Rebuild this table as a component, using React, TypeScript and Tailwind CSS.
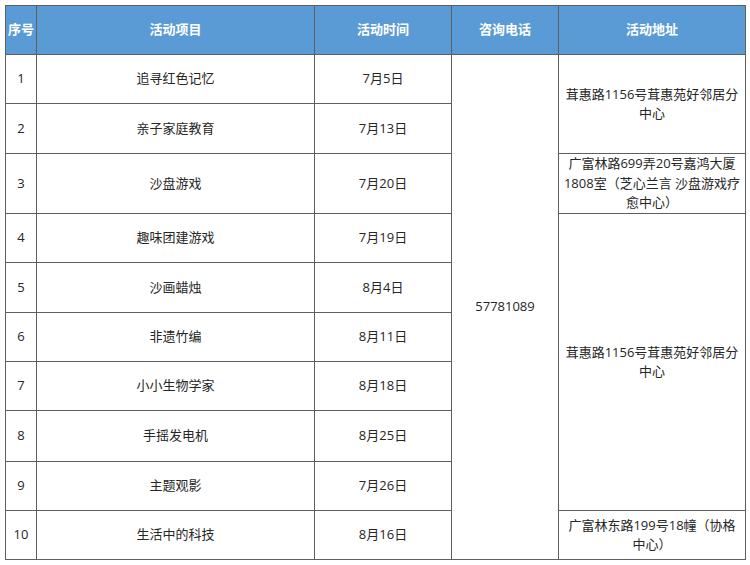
const rows = [
  { no: "1", name: "追寻红色记忆", date: "7月5日", h: "h-[49px]" },
  { no: "2", name: "亲子家庭教育", date: "7月13日", h: "h-[50px]" },
  { no: "3", name: "沙盘游戏", date: "7月20日", h: "h-[60px]" },
  { no: "4", name: "趣味团建游戏", date: "7月19日", h: "h-[49px]" },
  { no: "5", name: "沙画蜡烛", date: "8月4日", h: "h-[50px]" },
  { no: "6", name: "非遗竹编", date: "8月11日", h: "h-[49px]" },
  { no: "7", name: "小小生物学家", date: "8月18日", h: "h-[49px]" },
  { no: "8", name: "手摇发电机", date: "8月25日", h: "h-[51px]" },
  { no: "9", name: "主题观影", date: "7月26日", h: "h-[49px]" },
  { no: "10", name: "生活中的科技", date: "8月16日", h: "h-[49px]" },
]

// address cells keyed by the row they start on
const addresses: Record<number, { text: string; span: number }> = {
  0: { text: "茸惠路1156号茸惠苑好邻居分中心", span: 2 },
  2: { text: "广富林路699弄20号嘉鸿大厦1808室（芝心兰言 沙盘游戏疗愈中心）", span: 1 },
  3: { text: "茸惠路1156号茸惠苑好邻居分中心", span: 6 },
  9: { text: "广富林东路199号18幢（协格中心）", span: 1 },
}

const cell = "border border-[#5f5f5f] text-center align-middle"

export default function App() {
  return (
    <div className="w-[750px] h-[565px] bg-white pl-[5px] pt-[5px] font-['Open_Sans','Noto_Sans_CJK_SC',sans-serif] text-[13px] text-[#262626]">
      <table className="table-fixed border-collapse w-[740px]">
        <colgroup>
          <col className="w-[31px]" />
          <col className="w-[278px]" />
          <col className="w-[137px]" />
          <col className="w-[107px]" />
          <col className="w-[187px]" />
        </colgroup>
        <thead>
          <tr className="h-[49px] bg-[#5b9bd5] text-white font-bold">
            <th className={`${cell} border-[#3d3d3d] px-0`}>序号</th>
            <th className={`${cell} border-[#3d3d3d]`}>活动项目</th>
            <th className={`${cell} border-[#3d3d3d]`}>活动时间</th>
            <th className={`${cell} border-[#3d3d3d]`}>咨询电话</th>
            <th className={`${cell} border-[#3d3d3d]`}>活动地址</th>
          </tr>
        </thead>
        <tbody>
          {rows.map((r, i) => (
            <tr key={r.no} className={r.h}>
              <td className={`${cell} px-0`}>{r.no}</td>
              <td className={cell}>{r.name}</td>
              <td className={cell}>{r.date}</td>
              {i === 0 && (
                <td className={cell} rowSpan={10}>
                  57781089
                </td>
              )}
              {addresses[i] && (
                <td className={`${cell} px-[4px] leading-[19.5px]`} rowSpan={addresses[i].span}>
                  {addresses[i].text}
                </td>
              )}
            </tr>
          ))}
        </tbody>
      </table>
    </div>
  )
}
